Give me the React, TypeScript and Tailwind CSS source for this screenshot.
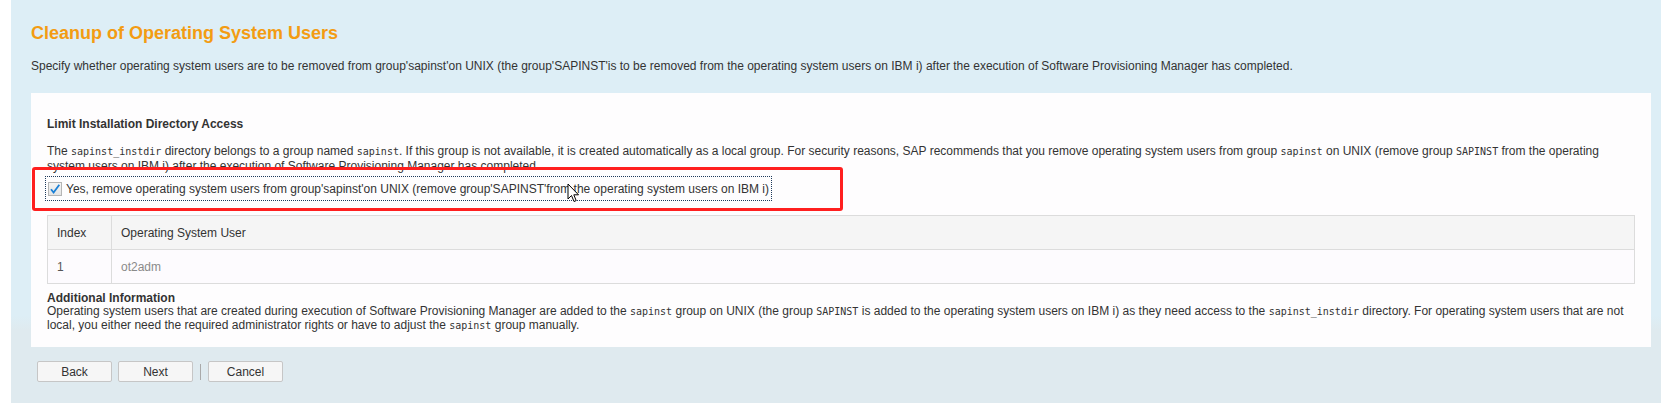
import React from "react";

const Mono = ({ children }: { children: React.ReactNode }) => (
  <span className="font-['DejaVu_Sans_Mono',monospace] text-[10px]">{children}</span>
);

const Cursor = () => (
  <svg width="13" height="20" viewBox="0 0 13 20" className="absolute left-[536px] top-[90px]">
    <path d="M1 1 L1 16 L4.5 12.5 L7 18.5 L9.2 17.6 L6.8 11.8 L11.5 11.8 Z" fill="#fff" stroke="#000" strokeWidth="1" strokeLinejoin="round" />
  </svg>
);

const NavButton = ({ label }: { label: string }) => (
  <button className="h-[21px] w-[75px] rounded-[2px] border border-[#c6c6c6] bg-[#f6f6f6] text-[12px] text-[#333]">
    {label}
  </button>
);

export default function App() {
  return (
    <div className="min-h-[403px] bg-white pl-[11px] font-['Liberation_Sans',Arial,sans-serif] text-[12px] text-[#333]">
      <div className="min-h-[403px] bg-[linear-gradient(to_bottom,#ddeef6_0,#ddeef6_316px,#dfeaef_330px,#dfeaef_100%)] pl-[20px] pr-[10px] pt-[22px]">
        <h1 className="text-[18px] font-bold leading-[22px] text-[#f39c12]">Cleanup of Operating System Users</h1>
        <p className="mt-[15px] leading-[14px]">
          Specify whether operating system users are to be removed from group'sapinst'on UNIX (the group'SAPINST'is to be removed from the operating system users on IBM i) after the execution of Software Provisioning Manager has completed.
        </p>

        <div className="relative mt-[20px] bg-[#fefdfe] px-[16px] pb-[15px] pt-[24px]">
          <div className="font-bold leading-[14px]">Limit Installation Directory Access</div>
          <p className="mt-[13px] leading-[14px]">
            The <Mono>sapinst_instdir</Mono> directory belongs to a group named <Mono>sapinst</Mono>. If this group is not available, it is created automatically as a local group. For security reasons, SAP recommends that you remove operating system users from group <Mono>sapinst</Mono> on UNIX (remove group <Mono>SAPINST</Mono> from the operating system users on IBM i) after the execution of Software Provisioning Manager has completed.
          </p>

          <div className="mt-[3px] flex">
            <label className="-ml-[2px] flex h-[25px] items-center gap-[4px] border border-dotted border-[#1d3a5c] pl-[2px] pr-[2px]">
              <span className="flex h-[14px] w-[14px] items-center justify-center border border-[#b5b5b5] bg-[linear-gradient(#f4f4f4,#e4e4e4)]">
                <svg width="12" height="12" viewBox="0 0 12 12">
                  <path d="M2 6.2 L4.6 9.5 L10.3 1.8" fill="none" stroke="#1a7fd6" strokeWidth="1.8" />
                </svg>
              </span>
              <span>Yes, remove operating system users from group'sapinst'on UNIX (remove group'SAPINST'from the operating system users on IBM i)</span>
            </label>
          </div>

          <table className="mt-[14px] w-full border-collapse border border-[#dcdcdc]">
            <thead>
              <tr className="h-[34px] bg-[#f5f5f5]">
                <th className="w-[64px] border border-[#dcdcdc] px-[9px] text-left font-normal text-[#333]">Index</th>
                <th className="border border-[#dcdcdc] px-[9px] text-left font-normal text-[#333]">Operating System User</th>
              </tr>
            </thead>
            <tbody>
              <tr className="h-[34px] bg-[#fdfbfe]">
                <td className="border border-[#dcdcdc] px-[9px] text-[#555]">1</td>
                <td className="border border-[#dcdcdc] px-[9px] text-[#8a8a8a]">ot2adm</td>
              </tr>
            </tbody>
          </table>

          <div className="mt-[8px] font-bold leading-[13px]">Additional Information</div>
          <p className="leading-[13.5px]">
            Operating system users that are created during execution of Software Provisioning Manager are added to the <Mono>sapinst</Mono> group on UNIX (the group <Mono>SAPINST</Mono> is added to the operating system users on IBM i) as they need access to the <Mono>sapinst_instdir</Mono> directory. For operating system users that are not local, you either need the required administrator rights or have to adjust the <Mono>sapinst</Mono> group manually.
          </p>

          <div className="absolute left-[1px] top-[74px] h-[44px] w-[811px] rounded-[3px] border-[3px] border-[#ff1f1f]" />
          <Cursor />
        </div>

        <div className="mt-[14px] flex items-center pl-[6px]">
          <NavButton label="Back" />
          <div className="ml-[6px]">
            <NavButton label="Next" />
          </div>
          <div className="mx-[7px] h-[16px] w-px bg-[#a9a9a9]" />
          <NavButton label="Cancel" />
        </div>
      </div>
    </div>
  );
}
